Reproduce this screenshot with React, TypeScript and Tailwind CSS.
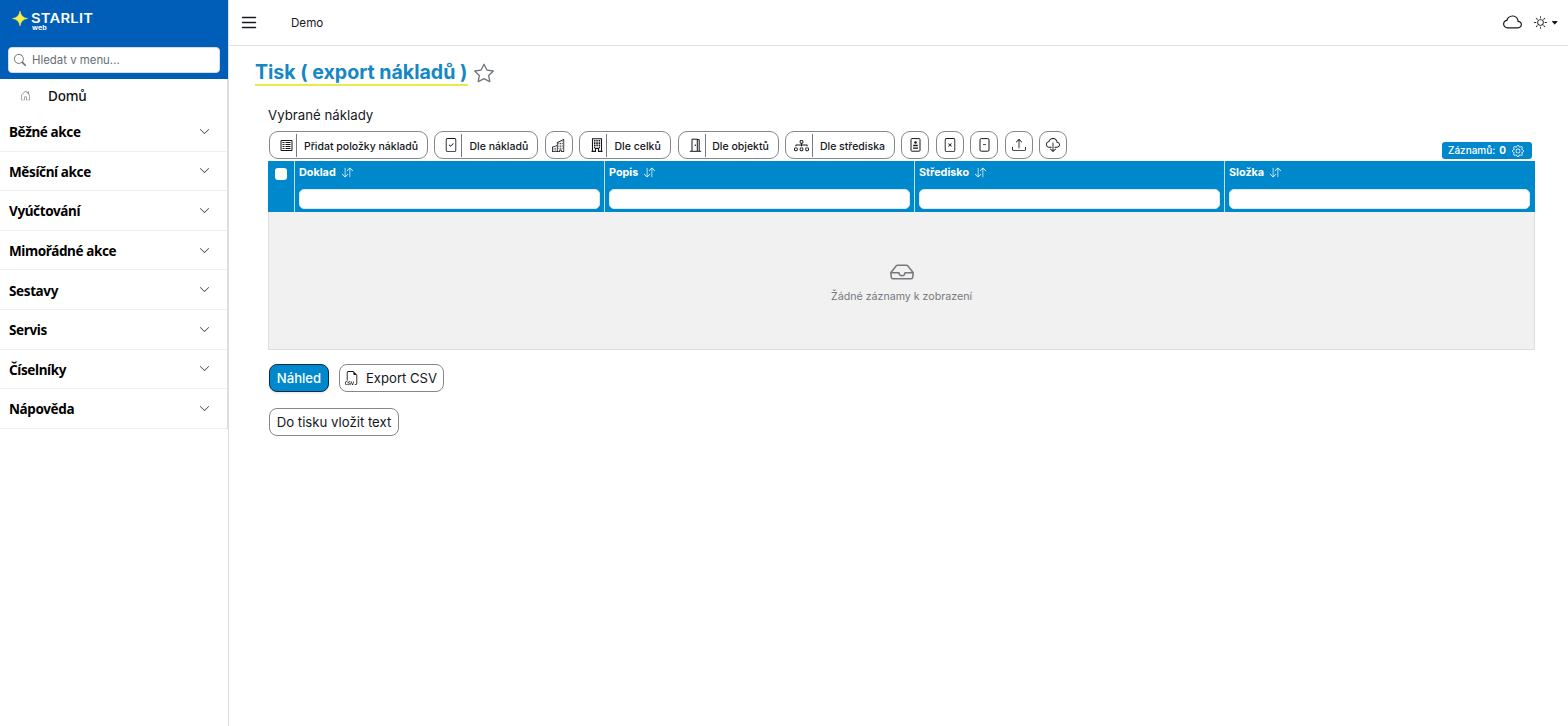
import type { ReactNode } from "react";
import clsx from "clsx";
import {
  BsArrowDownUp,
  BsBuildings,
  BsCaretDownFill,
  BsChevronDown,
  BsCloud,
  BsCloudDownload,
  BsDiagram3,
  BsFileCheck,
  BsFiletypeCsv,
  BsFileX,
  BsGear,
  BsHouseDoor,
  BsInbox,
  BsSearch,
  BsStar,
  BsSun,
  BsUpload,
} from "react-icons/bs";

const menu = [
  "Běžné akce",
  "Měsíční akce",
  "Vyúčtování",
  "Mimořádné akce",
  "Sestavy",
  "Servis",
  "Číselníky",
  "Nápověda",
];

const columns = ["Doklad", "Popis", "Středisko", "Složka"];

const Logo = () => (
  <div className="flex h-6 gap-[3px]">
    <svg width="16" height="18" viewBox="0 0 16 18" className="block">
      <path d="M8 1 Q9 7.8 15.5 8.5 Q9 9.3 8 16 Q7 9.3 .5 8.5 Q7 7.8 8 1Z" fill="#f4ee4a" stroke="#f4ee4a" strokeWidth=".5" />
    </svg>
    <div className="flex flex-col pt-[3px] text-white">
      <span className="h-[12px] origin-left scale-x-[1.18] text-[12.5px] leading-[12px] font-semibold tracking-[0.2px]">STARLIT</span>
      <span className="h-[7px] origin-left scale-x-[1.1] pl-px text-[6.4px] leading-[7px] font-bold">web</span>
    </div>
  </div>
);

const MenuIcon = () => (
  <svg width="16" height="14" viewBox="0 0 16 14" fill="none" stroke="currentColor" strokeWidth="1.5" strokeLinecap="round">
    <path d="M1.5 1.5h13M1.5 6.5h13M1.5 11.5h13" />
  </svg>
);

const ItemsIcon = () => (
  <svg width="13" height="13" viewBox="0 0 13 13" fill="none" stroke="currentColor">
    <path d="M1 1.5h11v10H1z" />
    <path d="M2.5 3.5h2M2.5 5.5h2M2.5 7.5h2M2.5 9.5h2M5.5 3.5h5M5.5 5.5h5M5.5 7.5h5M5.5 9.5h5" />
  </svg>
);

const RecordIcon = () => (
  <svg width="13" height="14" viewBox="0 0 13 14" fill="none" stroke="currentColor">
    <rect x="2" y=".6" width="9" height="12.6" rx=".8" />
    <circle cx="6.5" cy="4.5" r="1.3" fill="currentColor" stroke="none" />
    <path d="M4.3 7.5h4.4M4 10.2h5" strokeWidth="1.3" />
  </svg>
);

const MinusFileIcon = () => (
  <svg width="13" height="14" viewBox="0 0 13 14" fill="none" stroke="currentColor">
    <rect x="2" y=".6" width="9" height="12.6" rx="1.2" />
    <path d="M5 6.6h3" strokeWidth=".8" />
  </svg>
);

const TowerIcon = () => (
  <svg width="12" height="14" viewBox="0 0 12 14" fill="none" stroke="currentColor">
    <path d="M1.5 13V.7h9V13M.5 13.4h4v-3h3v3h4" strokeWidth="1.1" />
    <path d="M3 2.8h1.5M5.3 2.8h1.5M7.6 2.8h1.5M3 5.1h1.5M5.3 5.1h1.5M7.6 5.1h1.5M3 7.4h1.5M5.3 7.4h1.5M7.6 7.4h1.5M3 9.5h1M8 9.5h1" strokeWidth="1.6" />
  </svg>
);

const DoorIcon = () => (
  <svg width="13" height="14" viewBox="0 0 13 14" fill="none" stroke="currentColor">
    <path d="M3 13V1.2h5.3V13M8 1.6h2.2V13" />
    <path d="M.8 13.3h11.4" />
    <path d="M6.3 6.5v1.4" strokeWidth="1.1" />
  </svg>
);

type ToolButtonProps = {
  icon: ReactNode;
  label?: string;
  width: string;
};

const ToolButton = ({ icon, label, width }: ToolButtonProps) => (
  <button
    className={clsx(
      "flex h-7 shrink-0 items-center rounded-[9px] border border-[#85878c] bg-white text-[#14161b]",
      width,
      !label && "justify-center"
    )}
  >
    {label ? (
      <>
        <span className="flex h-[23px] w-[27px] shrink-0 items-center justify-end border-r border-[#777980] pr-[3px]">
          {icon}
        </span>
        <span className="flex-1 pt-[3px] pr-[2px] text-center text-[10.5px] font-medium whitespace-nowrap">{label}</span>
      </>
    ) : (
      icon
    )}
  </button>
);

const Sidebar = () => (
  <aside className="flex w-[229px] shrink-0 flex-col border-r border-[#dcdee2]">
    <div className="h-[79px] bg-[#005eb8] px-2 pt-[10px]">
      <div className="pl-1">
        <Logo />
      </div>
      <div className="mt-[13px] flex h-[26px] w-[212px] items-center gap-[6px] rounded-[4px] border border-[#d5dce5] bg-white px-[5px]">
        <BsSearch className="size-3 text-[#666]" />
        <span className="pt-[2px] text-[11.4px] text-[#696d73]">Hledat v menu...</span>
      </div>
    </div>
    <div className="flex h-[33px] items-center border-r border-[#dcdcdc] pl-5 font-['Noto_Sans',sans-serif]">
      <BsHouseDoor className="size-[11px] text-[#888]" />
      <span className="ml-[17px] pt-[2px] text-[13.5px] font-medium tracking-[-0.2px] text-[#111]">Domů</span>
    </div>
    <nav className="border-r border-[#dcdcdc]">
      {menu.map((item) => (
        <div
          key={item}
          className="flex h-[39.6px] items-center justify-between border-b border-[#efefef] pr-[17px] pl-[9px]"
        >
          <span className="pt-[2px] font-['Noto_Sans',sans-serif] text-[13.5px] font-bold tracking-[-0.38px] text-black">{item}</span>
          <BsChevronDown className="size-[11px] text-[#333]" />
        </div>
      ))}
    </nav>
  </aside>
);

const Topbar = () => (
  <header className="flex h-[46px] shrink-0 items-center border-b border-[#dfe1e4] pr-[10px] pl-3 text-[#181a1f]">
    <MenuIcon />
    <span className="ml-[34px] pt-[2px] text-[11.6px]">Demo</span>
    <div className="ml-auto flex items-center">
      <BsCloud className="size-[19px]" />
      <BsSun className="ml-3 size-[13px]" />
      <BsCaretDownFill className="ml-1 size-[7.5px]" />
    </div>
  </header>
);

const Toolbar = () => (
  <div className="flex h-7 gap-[6.4px] pl-px">
    <ToolButton width="w-[159px]" icon={<ItemsIcon />} label="Přidat položky nákladů" />
    <ToolButton width="w-[104px]" icon={<BsFileCheck className="size-[14px]" />} label="Dle nákladů" />
    <ToolButton width="w-7" icon={<BsBuildings className="size-[13px]" />} />
    <ToolButton width="w-[92px]" icon={<TowerIcon />} label="Dle celků" />
    <ToolButton width="w-[101px]" icon={<DoorIcon />} label="Dle objektů" />
    <ToolButton width="w-[110px]" icon={<BsDiagram3 className="size-[15px]" />} label="Dle střediska" />
    <ToolButton width="w-7" icon={<RecordIcon />} />
    <ToolButton width="w-7" icon={<BsFileX className="size-[14px]" />} />
    <ToolButton width="w-7" icon={<MinusFileIcon />} />
    <ToolButton width="w-7" icon={<BsUpload className="size-[14px]" />} />
    <ToolButton width="w-7" icon={<BsCloudDownload className="size-[14px]" />} />
  </div>
);

const DataTable = () => (
  <section className="border border-t-0 border-[#dedede] bg-[#f1f1f1]">
    <div className="-mx-px flex h-[50.5px] bg-[#0088cc] text-white">
      <div className="w-[26px] shrink-0 pt-[7px] pl-[7px]">
        <div className="size-3 rounded-[3px] bg-white" />
      </div>
      {columns.map((name) => (
        <div key={name} className="flex w-[310px] shrink-0 flex-col border-l border-[#b9e0f4] px-1">
          <div className="flex h-[26px] items-center gap-[6px] pb-[3px]">
            <span className="pt-[2px] text-[10.8px] font-bold">{name}</span>
            <BsArrowDownUp className="size-[11px]" />
          </div>
          <input className="mt-[1.5px] h-5 w-full rounded-[5px] border border-[#d8ebf5] bg-white" />
        </div>
      ))}
    </div>
    <div className="flex h-[137.5px] flex-col items-center pt-[48.5px] text-[#75787c]">
      <BsInbox className="size-6" />
      <span className="mt-[5px] text-[10.65px]">Žádné záznamy k zobrazení</span>
    </div>
  </section>
);

const App = () => {
  return (
    <div className="flex h-screen overflow-hidden bg-white font-['Inter',sans-serif]">
      <Sidebar />
      <div className="flex min-w-0 flex-1 flex-col">
        <Topbar />
        <main className="pr-[33px] pl-[26px] text-[#15171c]">
          <div className="mt-[13px] flex h-[27px] items-center gap-[6px]">
            <h1 className="h-[27px] w-[213px] border-b-2 border-[#ece94e] text-[19.6px] leading-[27px] font-bold tracking-[-0.02px] whitespace-nowrap text-[#1587c5]">
              Tisk ( export nákladů )
            </h1>
            <BsStar className="size-5 text-[#70757b]" />
          </div>

          <div className="pt-[19px] pl-[13px]">
            <h2 className="h-[26px] text-[13.25px] leading-[21px]">Vybrané náklady</h2>
            <div className="flex h-[30px] items-start justify-between">
              <Toolbar />
              <div className="mt-[11px] mr-[3px] flex h-[17px] w-[90px] items-center rounded-[3px] bg-[#0088cc] pl-[6px] text-[10px] font-medium text-white">
                <span>Záznamů:</span>
                <b className="ml-[4px]">0</b>
                <BsGear className="ml-[6px] size-3" />
              </div>
            </div>

            <DataTable />

            <div className="mt-[14px] flex gap-[10px] pl-px text-[13.1px]">
              <button className="h-7 w-[60px] rounded-[8px] border border-[#102c48] bg-[#0088cc] pt-[2px] font-medium text-white shadow">
                Náhled
              </button>
              <button className="flex h-7 w-[105px] items-center gap-[7px] rounded-[8px] border border-[#85878c] pl-[5px] whitespace-nowrap">
                <BsFiletypeCsv className="size-[14px] shrink-0" />
                <span className="pt-[2px]">Export CSV</span>
              </button>
            </div>
            <button className="mt-4 ml-px h-7 w-[130px] rounded-[8px] border border-[#85878c] pt-[2px] text-[13.2px] whitespace-nowrap">
              Do tisku vložit text
            </button>
          </div>
        </main>
      </div>
    </div>
  );
};

export default App;
